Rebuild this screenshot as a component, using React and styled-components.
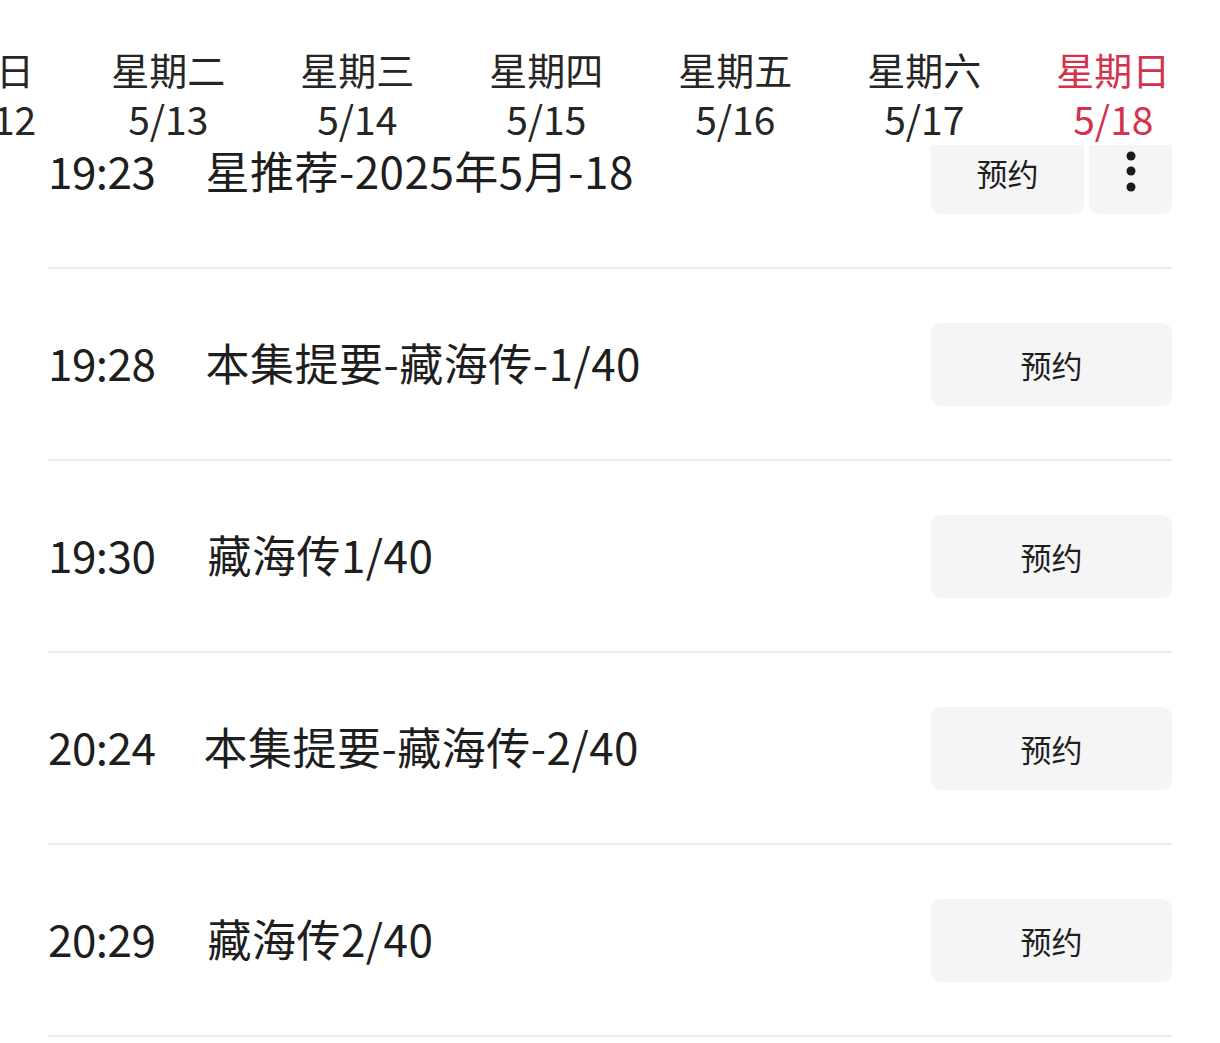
import React, { useLayoutEffect, useRef } from "react";
import styled, { createGlobalStyle } from "styled-components";

const GlobalStyle = createGlobalStyle`
  html, body { margin: 0; padding: 0; background: #fff; }
  body { font-family: "Noto Sans CJK SC", "Noto Sans", sans-serif; color: #222; }
  * { box-sizing: border-box; }
`;

const Screen = styled.div`
  position: relative;
  width: 1220px;
  height: 1043px;
  overflow: hidden;
  background: #fff;
`;

const Header = styled.header`
  position: absolute;
  top: 0;
  left: 0;
  right: 0;
  height: 145px;
  padding-top: 44px;
  background: #fff;
  z-index: 2;
`;

const TabStrip = styled.div`
  display: flex;
  gap: 75px;
  overflow: hidden;
  white-space: nowrap;
`;

const Tab = styled.div`
  flex: none;
  display: flex;
  flex-direction: column;
  align-items: center;
  color: ${(p) => (p.$active ? "#d3334d" : "#262626")};
`;

const TabEnd = styled.div`
  flex: none;
  width: 1px;
  margin-left: -10px;
`;

const TabLabel = styled.span`
  font-size: 38px;
  line-height: 50px;
`;

const TabDate = styled.span`
  font-size: 39px;
  line-height: 48px;
`;

const List = styled.main`
  padding: 77px 48px 0 48px;
`;

const Row = styled.div`
  display: flex;
  align-items: center;
  height: 192px;
  border-bottom: 2px solid #ebebeb;
`;

const Time = styled.span`
  font-size: 44px;
  line-height: 50px;
  margin-top: -4px;
  color: #1e1e1e;
  letter-spacing: -0.5px;
`;

const Title = styled.span`
  margin-left: ${(p) => p.$offset || 50}px;
  margin-top: -4px;
  font-size: 44px;
  line-height: 50px;
  letter-spacing: 0.5px;
  color: #1e1e1e;
  flex: 1;
`;

const Actions = styled.div`
  display: flex;
  gap: 5px;
`;

const ReserveButton = styled.button`
  width: ${(p) => (p.$compact ? 153 : 241)}px;
  height: 83px;
  border: none;
  border-radius: 10px;
  background: #f5f5f6;
  font-family: inherit;
  font-size: 31px;
  color: #1e1e1e;
  padding: 0;
`;

const MoreButton = styled.button`
  width: 83px;
  height: 83px;
  border: none;
  border-radius: 10px;
  background: #f5f5f6;
  display: flex;
  align-items: center;
  justify-content: center;
  padding: 0;
`;

const days = [
  { label: "今日", date: "5/12" },
  { label: "星期二", date: "5/13" },
  { label: "星期三", date: "5/14" },
  { label: "星期四", date: "5/15" },
  { label: "星期五", date: "5/16" },
  { label: "星期六", date: "5/17" },
  { label: "星期日", date: "5/18", active: true },
];

const programs = [
  { time: "19:23", title: "星推荐-2025年5月-18", more: true },
  { time: "19:28", title: "本集提要-藏海传-1/40" },
  { time: "19:30", title: "藏海传1/40", offset: 52 },
  { time: "20:24", title: "本集提要-藏海传-2/40", offset: 48 },
  { time: "20:29", title: "藏海传2/40", offset: 52 },
];

function Dots() {
  return (
    <svg width="16" height="46" viewBox="0 0 16 46">
      <circle cx="8" cy="7" r="4.5" fill="#1a1a1a" />
      <circle cx="8" cy="22" r="4.5" fill="#1a1a1a" />
      <circle cx="8" cy="38" r="4.5" fill="#1a1a1a" />
    </svg>
  );
}

export default function App() {
  const stripRef = useRef(null);
  useLayoutEffect(() => {
    if (stripRef.current) stripRef.current.scrollLeft = 44;
  }, []);

  return (
    <>
      <GlobalStyle />
      <Screen>
        <Header>
          <TabStrip ref={stripRef}>
            {days.map((d) => (
              <Tab key={d.date} $active={d.active}>
                <TabLabel>{d.label}</TabLabel>
                <TabDate>{d.date}</TabDate>
              </Tab>
            ))}
            <TabEnd />
          </TabStrip>
        </Header>
        <List>
          {programs.map((p) => (
            <Row key={p.time}>
              <Time>{p.time}</Time>
              <Title $offset={p.offset}>{p.title}</Title>
              <Actions>
                <ReserveButton $compact={p.more}>预约</ReserveButton>
                {p.more && (
                  <MoreButton aria-label="更多">
                    <Dots />
                  </MoreButton>
                )}
              </Actions>
            </Row>
          ))}
        </List>
      </Screen>
    </>
  );
}
